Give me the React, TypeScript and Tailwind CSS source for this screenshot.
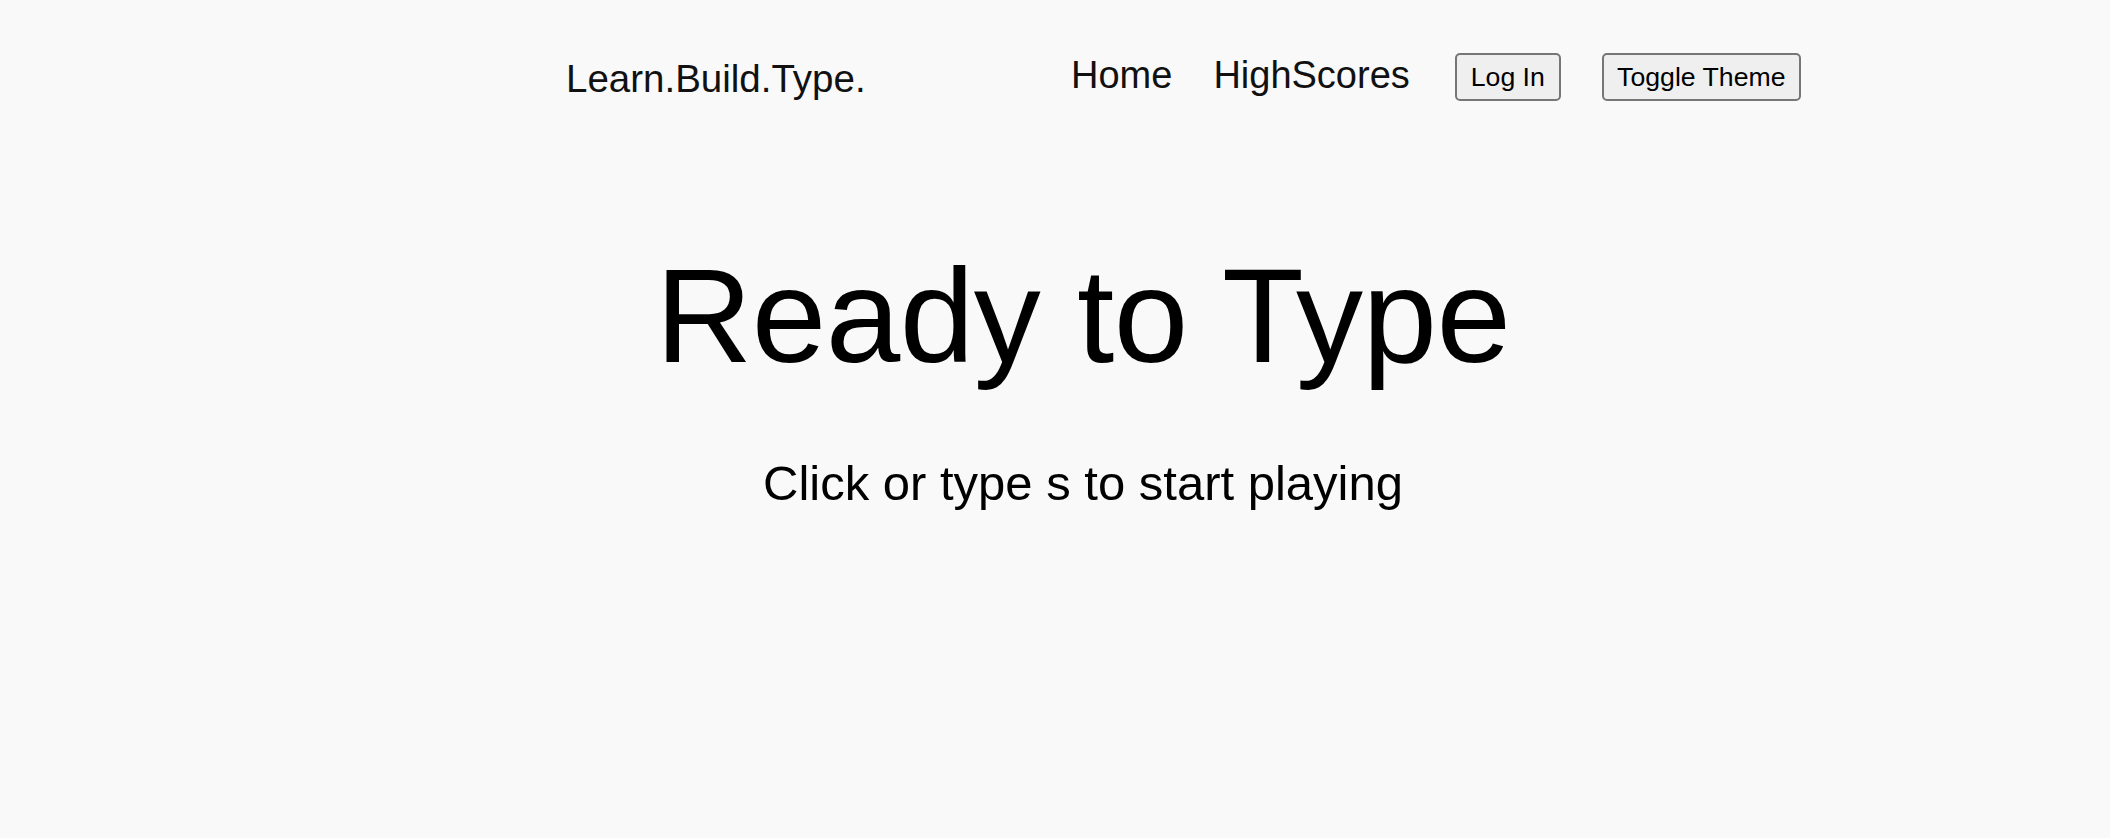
import React from "react";

export default function App() {
  const font = { fontFamily: '"Liberation Sans", Arial, sans-serif' };
  return (
    <div className="min-h-screen w-full bg-[#f9f9f9] text-black" style={font}>
      <header className="flex items-start pt-[53px] pl-[566px]">
        <div className="mt-[7px] w-[505px] text-[38.5px] leading-none text-[#111]">
          Learn.Build.Type.
        </div>
        <nav className="mt-[3px] flex items-start text-[38px] leading-none text-[#111]">
          <a className="cursor-pointer">Home</a>
          <a className="ml-[41px] cursor-pointer">HighScores</a>
        </nav>
        <div className="ml-[45px] flex items-start gap-[41px]">
          <button className="flex h-[48px] w-[106px] items-center justify-center rounded-[5px] border-2 border-[#767676] bg-[#efefef] text-[26.67px] leading-none text-black">
            Log In
          </button>
          <button className="flex h-[48px] w-[199px] items-center justify-center rounded-[5px] border-2 border-[#767676] bg-[#efefef] text-[26.67px] leading-none text-black">
            Toggle Theme
          </button>
        </div>
      </header>
      <main className="pl-[56px] text-center">
        <h1 className="mt-[148px] text-[134px] leading-none tracking-[-0.5px] text-black">
          Ready to Type
        </h1>
        <p className="mt-[76px] text-[49px] leading-none text-black">
          Click or type s to start playing
        </p>
      </main>
    </div>
  );
}
